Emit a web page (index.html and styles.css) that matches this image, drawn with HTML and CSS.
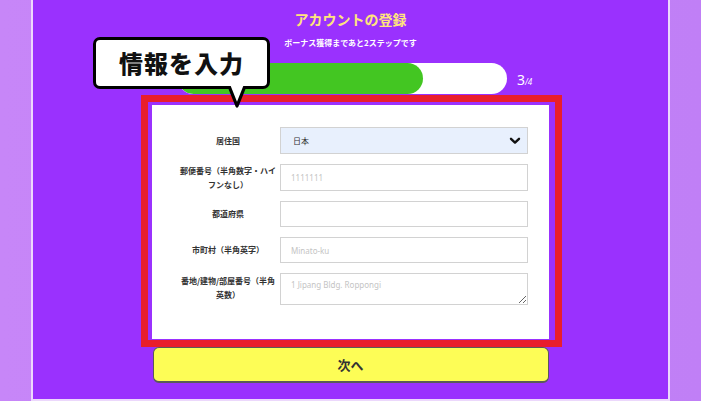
FILE: index.html
```html
<!DOCTYPE html>
<html lang="ja">
<head>
<meta charset="utf-8">
<title>アカウントの登録</title>
<link rel="stylesheet" href="styles.css">
</head>
<body>
<div class="page">
  <h1 class="title">アカウントの登録</h1>
  <p class="subtitle">ボーナス獲得まであと2ステップです</p>
  <div class="progress-row">
    <div class="bar"><div class="fill" style="width:245px"></div></div>
    <div class="count"><span class="cur">3</span><span class="tot">/4</span></div>
  </div>
  <form class="card">
    <div class="row">
      <div class="label">居住国</div>
      <div class="field select"><span>日本</span>
        <svg class="chev" width="12" height="8" viewBox="0 0 12 8"><path d="M2 1.8 L6 5.6 L10 1.8" fill="none" stroke="#111" stroke-width="2.4" stroke-linecap="round" stroke-linejoin="round"/></svg>
      </div>
    </div>
    <div class="row">
      <div class="label">郵便番号（半角数字・ハイ<br>フンなし）</div>
      <input class="field input" type="text" placeholder="1111111">
    </div>
    <div class="row">
      <div class="label">都道府県</div>
      <input class="field input short" type="text">
    </div>
    <div class="row">
      <div class="label">市町村（半角英字）</div>
      <input class="field input short" type="text" placeholder="Minato-ku">
    </div>
    <div class="row row-top">
      <div class="label">番地/建物/部屋番号（半角<br>英数）</div>
      <textarea class="field textarea" placeholder="1 Jipang Bldg. Roppongi"></textarea>
    </div>
  </form>
  <button class="btn" type="button">次へ</button>
</div>
<div class="highlight"></div>
<div class="callout">
  <span class="callout-text">情報を入力</span>
  <svg class="tail" width="20" height="23" viewBox="0 0 20 23"><polygon points="2,0 18,0 10,20" fill="#fff"/><polyline points="2,0 10,20 18,0" fill="none" stroke="#000" stroke-width="3.2" stroke-linejoin="round" stroke-linecap="round"/></svg>
</div>
</body>
</html>
```
FILE: styles.css
```css
* { box-sizing: border-box; }
html, body { margin: 0; padding: 0; }
body {
  width: 701px;
  height: 401px;
  overflow: hidden;
  position: relative;
  background: linear-gradient(90deg, #c786f8, #c07ff6);
  font-family: "Noto Sans CJK JP", "Noto Sans", sans-serif;
}
.page {
  margin-left: 31px;
  width: 639px;
  height: 401px;
  background: #9a31fe;
  border-left: 2px solid #ecd8fc;
  border-right: 2px solid #ecd8fc;
  border-bottom: 2px solid #ecd8fc;
  display: flex;
  flex-direction: column;
  align-items: center;
  padding-top: 9px;
}
.title {
  margin: 0;
  font-size: 14px;
  line-height: 20px;
  font-weight: 700;
  color: #ffe47c;
}
.subtitle {
  margin: 8px 0 0;
  font-size: 8px;
  line-height: 12px;
  font-weight: 700;
  color: #fff;
}
.progress-row {
  margin-top: 14px;
  width: 397px;
  padding-left: 26px;
  display: flex;
  align-items: center;
  gap: 10px;
}
.bar {
  width: 329px;
  height: 31px;
  border-radius: 16px;
  background: #fff;
  overflow: hidden;
}
.fill {
  height: 100%;
  background: #43c622;
  border-radius: 16px;
}
.count {
  color: #fff;
  font-family: "Noto Sans", sans-serif;
  white-space: nowrap;
}
.cur { font-size: 14px; }
.tot { font-size: 8px; font-style: italic; }
.card {
  margin: 11px 0 0;
  width: 397px;
  height: 234px;
  background: #fff;
  padding: 22px 21px 0 26px;
  display: flex;
  flex-direction: column;
  gap: 10px;
}
.row {
  display: flex;
  align-items: center;
  gap: 2px;
}
.row-top { align-items: flex-start; }
.label {
  width: 100px;
  text-align: center;
  font-size: 8px;
  line-height: 13.5px;
  font-weight: 700;
  color: #333;
}
.row-top .label { padding-top: 1px; }
.field {
  width: 248px;
  height: 27px;
  border: 1px solid #d2d2d2;
  margin: 0;
  font-family: "Noto Sans", "Noto Sans CJK JP", sans-serif;
  font-size: 8px;
  color: #333;
}
.short { height: 26px; }
.select {
  background: #e8f0fd;
  display: flex;
  align-items: center;
  justify-content: space-between;
  padding: 0 6px 0 12px;
  font-family: "Noto Sans CJK JP", sans-serif;
}
.input {
  background: #fff;
  padding: 0 10px;
  outline: none;
}
.textarea {
  height: 32px;
  padding: 5px 10px;
  resize: vertical;
  outline: none;
  background: #fff;
}
.input::placeholder, .textarea::placeholder { color: #c4c4c4; }
.btn {
  margin-top: 8px;
  width: 396px;
  height: 36px;
  background: #fdfd56;
  border: 1px solid #5a5a5a;
  border-bottom-width: 2px;
  border-radius: 6px;
  font-family: "Noto Sans CJK JP", sans-serif;
  font-size: 13px;
  font-weight: 700;
  color: #333;
  padding: 0;
}
.highlight {
  position: absolute;
  left: 141px;
  top: 95px;
  width: 421px;
  height: 252px;
  border: 7px solid #e91e2c;
}
.callout {
  position: absolute;
  left: 93px;
  top: 37px;
  width: 177px;
  height: 52px;
  background: #fff;
  border: 3px solid #000;
  border-radius: 7px;
  display: flex;
  align-items: center;
  justify-content: center;
}
.callout-text {
  font-size: 24px;
  font-weight: 900;
  letter-spacing: 1px;
  color: #111;
  line-height: 1;
}
.tail {
  position: absolute;
  left: 131px;
  top: 46px;
}
```
